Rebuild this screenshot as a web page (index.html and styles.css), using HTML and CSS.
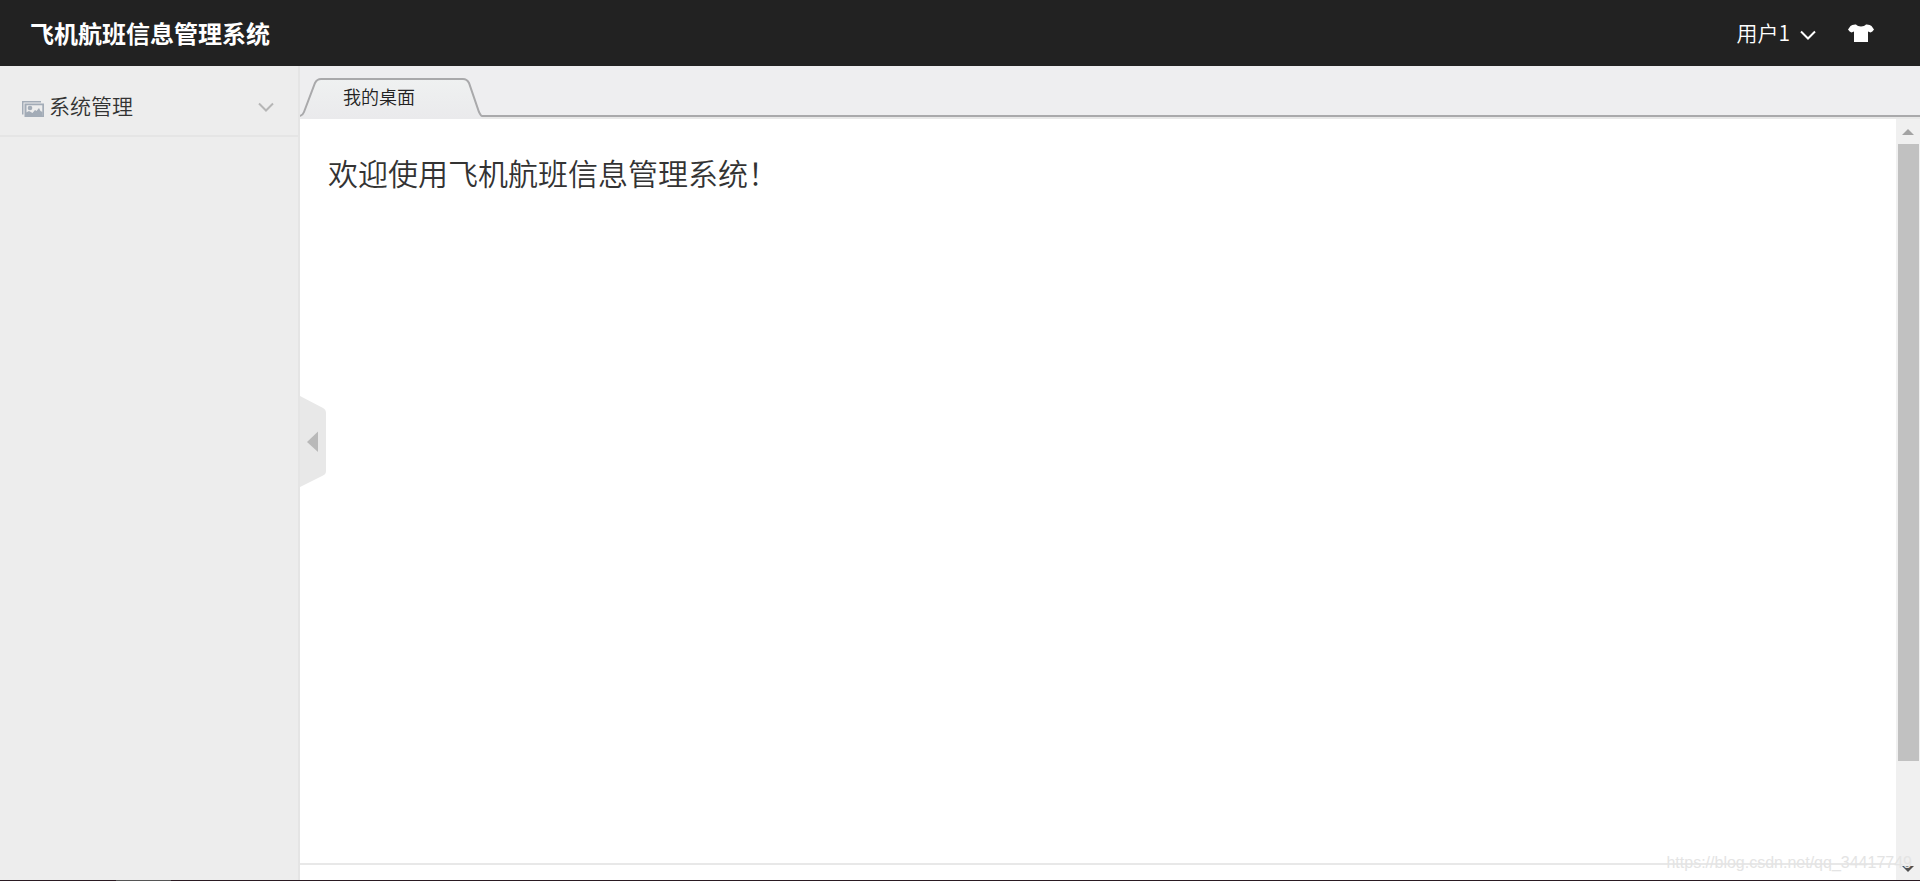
FILE: index.html
```
<!DOCTYPE html>
<html lang="zh-CN">
<head>
<meta charset="utf-8">
<title>飞机航班信息管理系统</title>
<link rel="stylesheet" href="styles.css">
</head>
<body>
<header class="navbar">
  <a class="logo" href="#">飞机航班信息管理系统</a>
  <nav class="user-nav">
    <button class="user-button" type="button">用户1
      <svg class="chevron" viewBox="0 0 16 10"><path d="M1 1.5 8 8.5 15 1.5"/></svg>
    </button>
    <button class="skin-button" type="button" aria-label="换肤">
      <svg class="shirt" viewBox="0 0 26 18"><path d="M8 .5C9.800 3 16.200 3 18 .5Q22 .3 23.500 2L26 5.500Q24.500 7.800 22.500 8.500L20 7.500V18H6V7.500L3.500 8.500Q1.500 7.800 0 5.500L2.500 2Q4 .3 8 .5Z"/></svg>
    </button>
  </nav>
</header>
<div class="body">
  <aside class="sidebar">
    <button class="menu-item" type="button">
      <svg class="picture" viewBox="0 0 22 16"><path d="M.75 13.500V.75H19" fill="none" stroke="#a3acb7" stroke-width="1.500"/><path fill="#a3acb7" fill-rule="evenodd" d="M2.500 2.500H22V16H2.500ZM4.500 4.300V14.500H20.300V4.300Z"/><circle cx="8" cy="7" r="2.300" fill="#a3acb7"/><path fill="#a3acb7" d="M4 15V11.500L7 10 10.500 12 13 9 14.500 10 17 7 18.500 10 20.500 11V15Z"/></svg>
      <span>系统管理</span>
      <svg class="chevron menu-chevron" viewBox="0 0 16 10"><path d="M1 1.500 8 8.500 15 1.500"/></svg>
    </button>
  </aside>
  <main class="main">
    <button class="collapse" type="button" aria-label="收起菜单">
      <svg viewBox="0 0 26 92"><path fill="#e8e8e8" d="M0 0 23 12Q26 13.500 26 17V75Q26 78 23 79.500L0 91Z"/><path fill="#b9b9b9" d="M7 46 18 35.500V56Z"/></svg>
    </button>
    <nav class="tabs">
      <a class="tab" href="#">
        <svg class="tab-shape" viewBox="0 0 182 42"><defs><linearGradient id="tab-fill" x2="0" y2="1"><stop stop-color="#eff1f1"/><stop offset="1" stop-color="#eaeaec"/></linearGradient></defs><path fill="url(#tab-fill)" d="M0 42 4 37 15 7Q17 2 21 2H163Q167 2 169 7L179 34Q181 39 182 39V42Z"/><path fill="none" stroke="#a9a9ab" stroke-width="2" d="M0 39Q3 38 4 35L15 6Q17 2 21 2H163Q167 2 169 6L179 35Q181 39 182 39"/></svg>
        <span class="tab-text">我的桌面</span>
      </a>
      <span class="tab-line"></span>
    </nav>
    <div class="frame">
      <section class="page">
        <h1 class="welcome">欢迎使用飞机航班信息管理系统！</h1>
        <footer class="page-footer"></footer>
      </section>
      <div class="scrollbar">
        <svg class="arrow" viewBox="0 0 12 6"><path fill="#a3a3a3" d="M0 6 6 0 12 6Z"/></svg>
        <div class="track"><div class="thumb"></div></div>
        <svg class="arrow" viewBox="0 0 12 6"><path fill="#505050" d="M0 0H12L6 6Z"/></svg>
      </div>
    </div>
  </main>
</div>
<div class="taskbar"><span class="taskbar-item"></span></div>
<div class="watermark">https://blog.csdn.net/qq_34417749</div>
</body>
</html>
```
FILE: styles.css
```
* {
  box-sizing: border-box;
}

body {
  display: flex;
  flex-direction: column;
  height: 100vh;
  margin: 0;
  overflow: hidden;
  background: #fff;
  color: #333;
  font-family: "Noto Sans CJK SC", sans-serif;
  font-weight: 350;
}

button {
  padding: 0;
  border: 0;
  background: none;
  color: inherit;
  font: inherit;
  cursor: pointer;
}

a {
  color: inherit;
  text-decoration: none;
}

svg {
  display: block;
  flex: none;
}

.navbar {
  display: flex;
  flex: none;
  align-items: center;
  justify-content: space-between;
  height: 66px;
  padding: 0 46px 2px 30px;
  background: #222;
  color: #fff;
}

.logo {
  font-size: 24px;
  font-weight: 700;
}

.user-nav {
  display: flex;
  align-items: center;
  gap: 32px;
}

.user-button {
  display: flex;
  align-items: center;
  gap: 10px;
  font-size: 21px;
}

.chevron {
  width: 16px;
  height: 10px;
  margin-top: 6px;
  fill: none;
  stroke: currentColor;
  stroke-width: 2;
}

.shirt {
  width: 26px;
  height: 18px;
  margin-top: 2px;
  fill: #fff;
}

.body {
  display: flex;
  flex: 1;
  min-height: 0;
}

.sidebar {
  flex: none;
  width: 300px;
  padding-top: 11px;
  border-right: 2px solid #e5e5e5;
  background: #ededed;
}

.menu-item {
  display: flex;
  align-items: center;
  gap: 5px;
  width: 100%;
  padding: 13px 24px 14px 22px;
  border-bottom: 2px solid #e5e5e5;
  font-size: 21px;
  line-height: 31px;
}

.picture {
  width: 22px;
  height: 16px;
  margin-top: 6px;
}

.menu-chevron {
  margin-top: 2px;
  margin-left: auto;
  color: #b6b6b6;
}

.main {
  position: relative;
  display: flex;
  flex: 1;
  flex-direction: column;
  min-width: 0;
}

.collapse {
  position: absolute;
  top: 330px;
  left: 0;
}

.collapse svg {
  width: 26px;
  height: 92px;
}

.tabs {
  display: flex;
  flex: none;
  align-items: flex-end;
  height: 53px;
  background: #eeeef0;
}

.tab {
  display: grid;
  width: 182px;
}

.tab-shape,
.tab-text {
  grid-area: 1 / 1;
}

.tab-shape {
  width: 182px;
  height: 42px;
}

.tab-text {
  z-index: 1;
  padding-left: 43px;
  color: #222;
  font-size: 18px;
  line-height: 38px;
}

.tab-line {
  flex: 1;
  height: 4px;
  border-top: 2px solid #a9a9ab;
  background: #e8e8e8;
}

.frame {
  display: flex;
  flex: 1;
  min-height: 0;
}

.page {
  display: flex;
  flex: 1;
  flex-direction: column;
  justify-content: space-between;
}

.welcome {
  margin: 0;
  padding: 31px 28px;
  font-size: 30px;
  font-weight: 350;
  line-height: 45px;
}

.page-footer {
  height: 17px;
  border-top: 2px solid #e8e8e8;
}

.scrollbar {
  display: flex;
  flex: none;
  flex-direction: column;
  align-items: center;
  gap: 9px;
  width: 24px;
  padding: 10px 0 8px;
  background: #f0f0f0;
}

.arrow {
  width: 12px;
  height: 6px;
}

.track {
  flex: 1;
  width: 21px;
}

.thumb {
  height: 86.6%;
  background: #c1c1c1;
}

.taskbar {
  flex: none;
  height: 1px;
  padding-left: 116px;
  background: #2a1a22;
}

.taskbar-item {
  display: block;
  width: 55px;
  height: 1px;
  background: #555;
}

.watermark {
  position: absolute;
  right: 8px;
  bottom: 8px;
  color: #e4e4e4;
  font-family: "Liberation Sans", sans-serif;
  font-size: 16px;
  font-weight: 400;
  line-height: 20px;
}
```
